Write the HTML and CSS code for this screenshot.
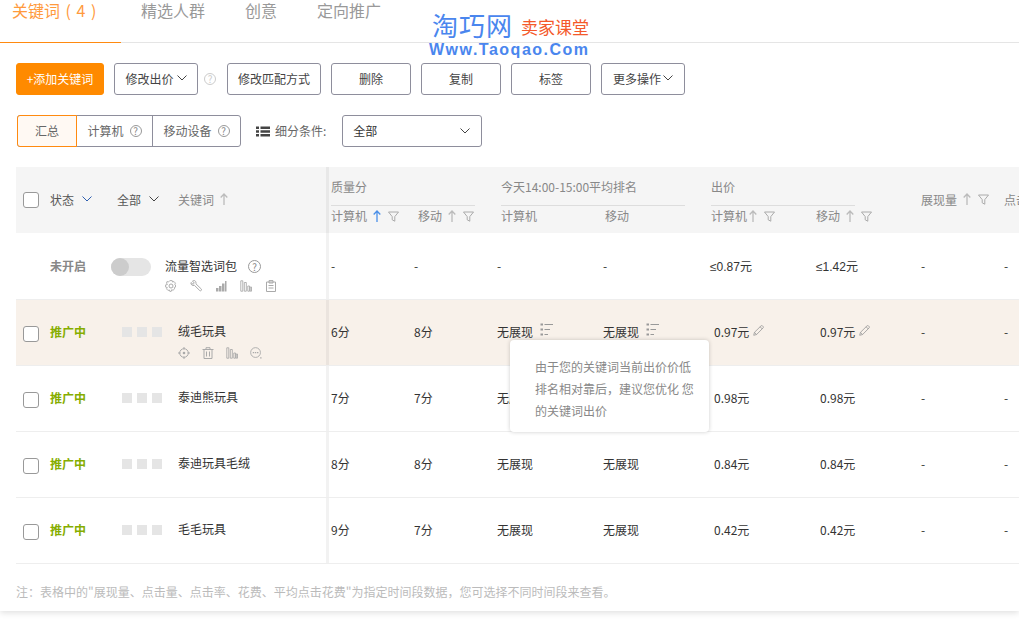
FILE: index.html
```html
<!DOCTYPE html>
<html lang="zh-CN">
<head>
  <meta charset="UTF-8" />
  <meta name="viewport" content="width=device-width, initial-scale=1.0"/>
  <title>关键词</title>
  <link rel="stylesheet" href="styles.css">
</head>
<body>

  <svg class="icon-defs" aria-hidden="true">
    <symbol id="i-chevron" viewBox="0 0 10 6"><path d="M.5.5 5 5 9.500.5" fill="none" stroke="currentColor"/></symbol>
    <symbol id="i-arrow" viewBox="0 0 8 12"><path d="M4 12V1M.7 4.500 4 1l3.300 3.500" fill="none" stroke="currentColor" stroke-width="1.300"/></symbol>
    <symbol id="i-filter" viewBox="0 0 11 11"><path d="M.5 1h10L6.800 5.600v4.600L4.200 8.800V5.600z" fill="none" stroke="currentColor"/></symbol>
    <symbol id="i-gear" viewBox="0 0 12 12"><path d="M4.800.6h2.400l.4 1.500 1.400-.6 1.500 1.700-.9 1.200.9.500v2.200l-1.300.4.400 1.400-1.700 1.500-1.100-.9-.6 1.900H4.800l-.4-1.500-1.400.6-1.500-1.700.9-1.200-1.800-.5V4.900l1.800-.4-.9-1.400L2 1.500l1.400.6z" fill="none" stroke="currentColor" stroke-width=".9"/><circle cx="6" cy="6" r="2" fill="none" stroke="currentColor"/></symbol>
    <symbol id="i-wrench" viewBox="0 0 12 12"><path d="M1 2.500 3 4.300l1.300-1.200L2.500 1C4-.1 6 .7 6 2.800c0 .5 0 .8-.1 1l5.500 5.300c.6.900-.6 2.300-1.600 1.500L4.500 5.400C2.500 6 .3 4.500 1 2.500z" fill="none" stroke="currentColor"/></symbol>
    <symbol id="i-signal" viewBox="0 0 12 12"><path d="M1 8h2.500v3.500H1zM4 6h2.500v5.500H4zM7 3.500h2.500v8H7zM10 1h1.500v10.500H10z" fill="currentColor"/></symbol>
    <symbol id="i-bars" viewBox="0 0 12 12"><path d="M.8.800h2v10.400h-2zM4.300 2.500h2v8.700h-2zM7.800 6h1.700v5.200H7.800zM10.200 7h1.300v4.200h-1.300z" fill="none" stroke="currentColor" stroke-width=".9"/></symbol>
    <symbol id="i-clip" viewBox="0 0 12 12"><path d="M1.500 2h9v9.500h-9zM4 .6h4V3H4zM3.500 5.500h5M3.500 8h5" fill="none" stroke="currentColor"/></symbol>
    <symbol id="i-target" viewBox="0 0 12 12"><circle cx="6" cy="6" r="4.300" fill="none" stroke="currentColor"/><circle cx="6" cy="6" r="1.300" fill="currentColor"/><path d="M6 0v2.500M6 9.500V12M0 6h2.500M9.500 6H12" stroke="currentColor"/></symbol>
    <symbol id="i-trash" viewBox="0 0 12 12"><path d="M.5 2.500h11M4 2.500V.7h4v1.800M2 2.500v9h8v-9M4.500 4.500v5M7.500 4.500v5" fill="none" stroke="currentColor"/></symbol>
    <symbol id="i-more" viewBox="0 0 13 13"><circle cx="6" cy="6" r="5.300" fill="none" stroke="currentColor"/><path d="M3 5.300h1.500v1.400H3zM5.300 5.300h1.500v1.400H5.300zM7.600 5.300h1.500v1.400H7.600zM11 11h1.500v1.500H11z" fill="currentColor"/></symbol>
    <symbol id="i-rank" viewBox="0 0 13 13"><path d="M4.500 1.500H13M4.500 6.500H10M4.500 11.500H8" stroke="currentColor" fill="none"/><path d="M.5.500h2.500v2H.5zM.5 5.500h2.500v2H.5zM.5 10.500h2.500v2H.5z" fill="currentColor"/></symbol>
    <symbol id="i-pencil" viewBox="0 0 12 12"><path d="M.8 11.200 1.600 8 8.800.9c.6-.5 1.100-.4 1.600.1l.6.6c.5.600.5 1 0 1.600L3.900 10.400zM1.600 8l2.300 2.400M7.800 2l2.300 2.300" fill="none" stroke="currentColor" stroke-width=".9"/></symbol>
    <symbol id="i-list" viewBox="0 0 14 11"><path d="M0 .5h3v2.500H0zM4.500.5H14v2.500H4.500zM0 4.300h3v2.500H0zM4.500 4.300H14v2.500H4.500zM0 8h3v2.500H0zM4.500 8H14v2.500H4.500z" fill="currentColor"/></symbol>
  </svg>

  <div class="logo">
    <div class="logo-top"><span class="logo-name">淘巧网</span><span class="logo-sub">卖家课堂</span></div>
    <div class="logo-url">Www.Taoqao.Com</div>
  </div>

  <div class="page">
    <div class="tabs">
      <div class="tab tab-active">关键词 ( 4 )</div>
      <div class="tab">精选人群</div>
      <div class="tab">创意</div>
      <div class="tab">定向推广</div>
    </div>

    <div class="toolbar">
      <button class="btn btn-primary">+添加关键词</button>
      <button class="btn btn-price">修改出价 <svg class="chev"><use href="#i-chevron"/></svg></button>
      <span class="help help-light">?</span>
      <button class="btn btn-match">修改匹配方式</button>
      <button class="btn btn-plain">删除</button>
      <button class="btn btn-plain">复制</button>
      <button class="btn btn-plain">标签</button>
      <button class="btn btn-more">更多操作<svg class="chev"><use href="#i-chevron"/></svg></button>
    </div>

    <div class="filters">
      <div class="segment">
        <div class="seg seg-active seg-total">汇总</div>
        <div class="seg seg-pc">计算机<span class="help">?</span></div>
        <div class="seg seg-mobile">移动设备<span class="help">?</span></div>
      </div>
      <svg class="list-icon"><use href="#i-list"/></svg>
      <span class="filter-label">细分条件:</span>
      <div class="select">全部<svg class="chev"><use href="#i-chevron"/></svg></div>
    </div>

    <div class="table">
      <div class="thead">
        <div class="cell-check"><span class="checkbox"></span></div>
        <div class="th-dark">状态<svg class="chev chev-blue"><use href="#i-chevron"/></svg></div>
        <div class="th-dark th-all">全部<svg class="chev"><use href="#i-chevron"/></svg></div>
        <div class="th-keyword edge">关键词<svg class="arrow"><use href="#i-arrow"/></svg></div>

        <div class="group group-quality">
          <div class="group-title">质量分</div>
          <div class="group-sub">
            <span class="sub sub-87">计算机<svg class="arrow arrow-on"><use href="#i-arrow"/></svg><svg class="funnel"><use href="#i-filter"/></svg></span>
            <span class="sub">移动<svg class="arrow"><use href="#i-arrow"/></svg><svg class="funnel"><use href="#i-filter"/></svg></span>
          </div>
        </div>
        <div class="group group-rank">
          <div class="group-title">今天14:00-15:00平均排名</div>
          <div class="group-sub">
            <span class="sub sub-104">计算机</span>
            <span class="sub">移动</span>
          </div>
        </div>
        <div class="group group-bid">
          <div class="group-title">出价</div>
          <div class="group-sub">
            <span class="sub sub-105">计算机<svg class="arrow arrow-tight"><use href="#i-arrow"/></svg><svg class="funnel"><use href="#i-filter"/></svg></span>
            <span class="sub">移动<svg class="arrow"><use href="#i-arrow"/></svg><svg class="funnel"><use href="#i-filter"/></svg></span>
          </div>
        </div>
        <div class="th-single">展现量<svg class="arrow"><use href="#i-arrow"/></svg><svg class="funnel"><use href="#i-filter"/></svg></div>
        <div class="th-single">点击量</div>
      </div>

      <div class="row row-pack">
        <div class="cell-check"></div>
        <div class="status status-off">未开启</div>
        <div class="cell-pack edge">
          <span class="switch"><span class="knob"></span></span>
          <div class="pack-info">
            <div class="pack-name">流量智选词包<span class="help help-name">?</span></div>
            <div class="row-icons pack-icons">
              <svg><use href="#i-gear"/></svg>
              <svg><use href="#i-wrench"/></svg>
              <svg><use href="#i-signal"/></svg>
              <svg><use href="#i-bars"/></svg>
              <svg><use href="#i-clip"/></svg>
            </div>
          </div>
        </div>
        <div class="cell cell-first">-</div>
        <div class="cell">-</div>
        <div class="cell">-</div>
        <div class="cell">-</div>
        <div class="cell cell-le">≤0.87元</div>
        <div class="cell cell-le">≤1.42元</div>
        <div class="cell">-</div>
        <div class="cell">-</div>
      </div>

      <div class="row row-active">
        <div class="cell-check"><span class="checkbox"></span></div>
        <div class="status">推广中</div>
        <div class="squares"><i></i><i></i><i></i></div>
        <div class="cell-name edge">
          <div>绒毛玩具</div>
          <div class="row-icons">
            <svg><use href="#i-target"/></svg>
            <svg><use href="#i-trash"/></svg>
            <svg><use href="#i-bars"/></svg>
            <svg><use href="#i-more"/></svg>
          </div>
        </div>
        <div class="cell cell-first">6分</div>
        <div class="cell">8分</div>
        <div class="cell">无展现<svg class="rank-icon"><use href="#i-rank"/></svg></div>
        <div class="cell">无展现<svg class="rank-icon"><use href="#i-rank"/></svg></div>
        <div class="cell">0.97元<svg class="pencil"><use href="#i-pencil"/></svg></div>
        <div class="cell">0.97元<svg class="pencil"><use href="#i-pencil"/></svg></div>
        <div class="cell">-</div>
        <div class="cell">-</div>
      </div>

      <div class="row">
        <div class="cell-check"><span class="checkbox"></span></div>
        <div class="status">推广中</div>
        <div class="squares"><i></i><i></i><i></i></div>
        <div class="cell-name edge"><div>泰迪熊玩具</div></div>
        <div class="cell cell-first">7分</div>
        <div class="cell">7分</div>
        <div class="cell">无展现</div>
        <div class="cell">无展现</div>
        <div class="cell">0.98元</div>
        <div class="cell">0.98元</div>
        <div class="cell">-</div>
        <div class="cell">-</div>
      </div>

      <div class="row">
        <div class="cell-check"><span class="checkbox"></span></div>
        <div class="status">推广中</div>
        <div class="squares"><i></i><i></i><i></i></div>
        <div class="cell-name edge"><div>泰迪玩具毛绒</div></div>
        <div class="cell cell-first">8分</div>
        <div class="cell">8分</div>
        <div class="cell">无展现</div>
        <div class="cell">无展现</div>
        <div class="cell">0.84元</div>
        <div class="cell">0.84元</div>
        <div class="cell">-</div>
        <div class="cell">-</div>
      </div>

      <div class="row">
        <div class="cell-check"><span class="checkbox"></span></div>
        <div class="status">推广中</div>
        <div class="squares"><i></i><i></i><i></i></div>
        <div class="cell-name edge"><div>毛毛玩具</div></div>
        <div class="cell cell-first">9分</div>
        <div class="cell">7分</div>
        <div class="cell">无展现</div>
        <div class="cell">无展现</div>
        <div class="cell">0.42元</div>
        <div class="cell">0.42元</div>
        <div class="cell">-</div>
        <div class="cell">-</div>
      </div>
    </div>

    <div class="note">注：表格中的"展现量、点击量、点击率、花费、平均点击花费"为指定时间段数据，您可选择不同时间段来查看。</div>
  </div>

  <div class="tooltip">由于您的关键词当前出价价低<br>排名相对靠后，建议您优化 您<br>的关键词出价</div>

</body>
</html>
```

FILE: styles.css
```css
* { margin: 0; padding: 0; box-sizing: border-box; }

html, body {
  width: 1019px;
  height: 626px;
  overflow: hidden;
  background: #fff;
}

body {
  font-family: "Noto Sans CJK SC", "Liberation Sans", sans-serif;
  font-size: 12px;
  color: #333;
  position: relative;
}

.icon-defs {
  position: absolute;
  width: 0;
  height: 0;
}

.page {
  height: 611px;
  overflow: hidden;
  box-shadow: 0 2px 6px rgba(0,0,0,0.12);
}

/* tabs */
.tabs {
  display: flex;
  height: 43px;
  border-bottom: 1px solid #e5e5e5;
}

.tab {
  font-size: 16px;
  line-height: 20px;
  color: #999;
  margin-right: 40px;
}

.tab-active {
  width: 121px;
  height: 43px;
  padding-left: 12px;
  margin-right: 20px;
  color: #ff9a3d;
  word-spacing: 2px;
  border-bottom: 1px solid #ff8a10;
}

/* logo */
.logo {
  position: absolute;
  left: 429px;
  top: 9px;
  width: 170px;
}

.logo-top {
  display: flex;
  align-items: flex-end;
  padding-left: 3px;
  height: 31px;
}

.logo-name {
  font-size: 26px;
  line-height: 31px;
  letter-spacing: 1px;
  color: #4a86ee;
  width: 89px;
}

.logo-sub {
  font-size: 17px;
  line-height: 26px;
  color: #f4592a;
}

.logo-url {
  font-family: "Liberation Sans", sans-serif;
  font-size: 16px;
  font-weight: 700;
  line-height: 20px;
  letter-spacing: 1.5px;
  color: #4a86ee;
}

/* toolbar */
.toolbar {
  display: flex;
  align-items: center;
  margin: 20px 0 0 16px;
  height: 32px;
}

.btn {
  height: 32px;
  padding-bottom: 2px;
  background: #fff;
  border: 1px solid #8e8e9c;
  border-radius: 3px;
  font-family: inherit;
  font-size: 12px;
  color: #444;
  margin-right: 10px;
  display: flex;
  align-items: center;
  justify-content: center;
  gap: 3px;
}

.btn-primary {
  width: 88px;
  background: #ff8a00;
  border-color: #ff8a00;
  color: #fff;
}

.btn-price { width: 84px; margin-right: 6px; }
.btn-match { width: 94px; }
.btn-plain { width: 80px; }
.btn-more { width: 84px; gap: 2px; }

.help {
  display: inline-block;
  width: 12px;
  height: 12px;
  border: 1px solid #999;
  border-radius: 50%;
  font-size: 10px;
  line-height: 10px;
  text-align: center;
  color: #888;
  flex: none;
}

.help-light {
  margin-right: 11px;
  border-color: #ccc;
  color: #ccc;
}

.chev {
  width: 10px;
  height: 6px;
  color: #444;
  flex: none;
}

/* filters */
.filters {
  display: flex;
  align-items: center;
  margin: 20px 0 0 17px;
  height: 32px;
}

.segment {
  display: flex;
  height: 32px;
  width: 224px;
  border: 1px solid #8e8e9c;
  border-radius: 3px;
  color: #666;
}

.seg {
  display: flex;
  align-items: center;
  justify-content: center;
  gap: 6px;
  padding-bottom: 1px;
  border-right: 1px solid #8e8e9c;
}

.seg:last-child { border-right: 0; }

.seg-total { width: 60px; }
.seg-pc { width: 76px; }
.seg-mobile { flex: 1; }

.seg-active {
  margin: -1px 0 -1px -1px;
  border: 1px solid #ff8a10;
  border-radius: 3px 0 0 3px;
  background: #fff9f3;
}

.list-icon {
  width: 14px;
  height: 11px;
  margin-left: 15px;
  color: #444;
}

.filter-label {
  margin-left: 5px;
  padding-bottom: 1px;
  color: #666;
}

.select {
  width: 140px;
  height: 32px;
  margin-left: 16px;
  padding: 0 11px 1px 10px;
  border: 1px solid #8e8e9c;
  border-radius: 3px;
  display: flex;
  align-items: center;
  justify-content: space-between;
}

/* table */
.table {
  margin: 20px 0 0 16px;
  width: 1088px;
}

.thead, .row {
  display: grid;
  grid-template-columns: 34px 61px 67px 151px 85px 83px 106px 111px 106px 101px 83px 100px;
}

.thead {
  grid-template-columns: 34px 61px 67px 151px 172px 210px 210px 83px 100px;
  height: 66px;
  background: #f5f5f5;
  color: #888;
  align-items: center;
}

.cell-check {
  padding-left: 7px;
  display: flex;
  align-items: center;
  height: 100%;
}

.checkbox {
  display: block;
  width: 16px;
  height: 16px;
  background: #fff;
  border: 1px solid #999;
  border-radius: 3px;
}

.row .checkbox { margin-top: 2px; }

.th-dark {
  color: #555;
  display: flex;
  align-items: center;
  gap: 8px;
  margin-top: -2px;
}

.th-all { padding-left: 6px; }

.chev-blue { color: #2f5fb0; }

.th-keyword, .th-single {
  display: flex;
  align-items: center;
  height: 100%;
  padding-bottom: 2px;
}

/* soft line along the right of the frozen columns */
.edge {
  border-right: 3px solid rgba(0,0,0,0.05);
  height: 100%;
}

.arrow {
  width: 8px;
  height: 12px;
  margin-left: 6px;
  color: #bbb;
  flex: none;
}

.arrow-on { color: #4a8fe8; }
.arrow-tight { margin-left: 2px; }

.funnel {
  width: 11px;
  height: 11px;
  margin-left: 7px;
  color: #aaa;
  flex: none;
}

.group {
  height: 100%;
}

.group-title {
  height: 39px;
  line-height: 14px;
  padding-top: 13px;
  border-bottom: 1px solid #ddd;
}

.group-sub {
  display: flex;
  height: 20px;
  line-height: 20px;
}

.sub {
  display: flex;
  align-items: center;
}

.sub-87 { width: 87px; }
.sub-104 { width: 104px; }
.sub-105 { width: 105px; }

.group-quality { padding-left: 2px; }
.group-quality .group-title { width: 144px; }
.group-rank .group-title { width: 184px; }
.group-bid .group-title { width: 144px; }

/* rows */
.row {
  height: 66px;
  border-bottom: 1px solid #eee;
  align-items: center;
}

.row-pack { height: 67px; }

.row-active { background: #f8f1ea; }

.status {
  font-weight: 700;
  color: #86ad00;
  padding-bottom: 2px;
}

.status-off { color: #888; }

.squares {
  display: flex;
  gap: 5px;
  padding-left: 11px;
  margin-top: -2px;
}

.squares i {
  display: block;
  width: 10px;
  height: 10px;
  background: #e5e5e5;
}

.cell-name {
  padding-top: 24px;
  line-height: 14px;
}

.row-icons {
  display: flex;
  gap: 12px;
  margin-top: 9px;
  color: #aaa;
}

.row-icons svg {
  width: 12px;
  height: 12px;
  flex: none;
}

.cell-pack {
  grid-column: 3 / span 2;
  display: flex;
  height: 100%;
}

.switch {
  display: block;
  width: 40px;
  height: 18px;
  border-radius: 9px;
  background: #e5e5e5;
  margin-top: 25px;
  flex: none;
}

.knob {
  display: block;
  width: 18px;
  height: 18px;
  border-radius: 50%;
  background: #ccc;
}

.pack-info {
  margin-left: 14px;
  padding-top: 26px;
}

.pack-name {
  display: flex;
  align-items: center;
  line-height: 14px;
  gap: 11px;
}

.help-name { width: 13px; height: 13px; line-height: 11px; }

.pack-icons { margin-top: 7px; gap: 13px; }

.row-pack .cell-le {
  margin-left: -4px;
  font-family: "Liberation Sans", "Noto Sans CJK SC", sans-serif;
}

.cell {
  display: flex;
  align-items: center;
  white-space: nowrap;
  padding-bottom: 2px;
}

.cell-first { padding-left: 2px; }

.rank-icon {
  width: 13px;
  height: 13px;
  margin: -4px 0 0 7px;
  color: #999;
}

.pencil {
  width: 11px;
  height: 11px;
  margin: -3px 0 0 4px;
  color: #999;
}

.note {
  margin: 20px 0 0 16px;
  line-height: 16px;
  color: #bbb;
}

/* tooltip */
.tooltip {
  position: absolute;
  left: 510px;
  top: 340px;
  width: 199px;
  height: 92px;
  padding: 16px 10px 0 25px;
  background: #fff;
  border-radius: 4px;
  box-shadow: 0 0 4px rgba(0,0,0,0.2);
  line-height: 22px;
  color: #888;
  white-space: nowrap;
}
```
